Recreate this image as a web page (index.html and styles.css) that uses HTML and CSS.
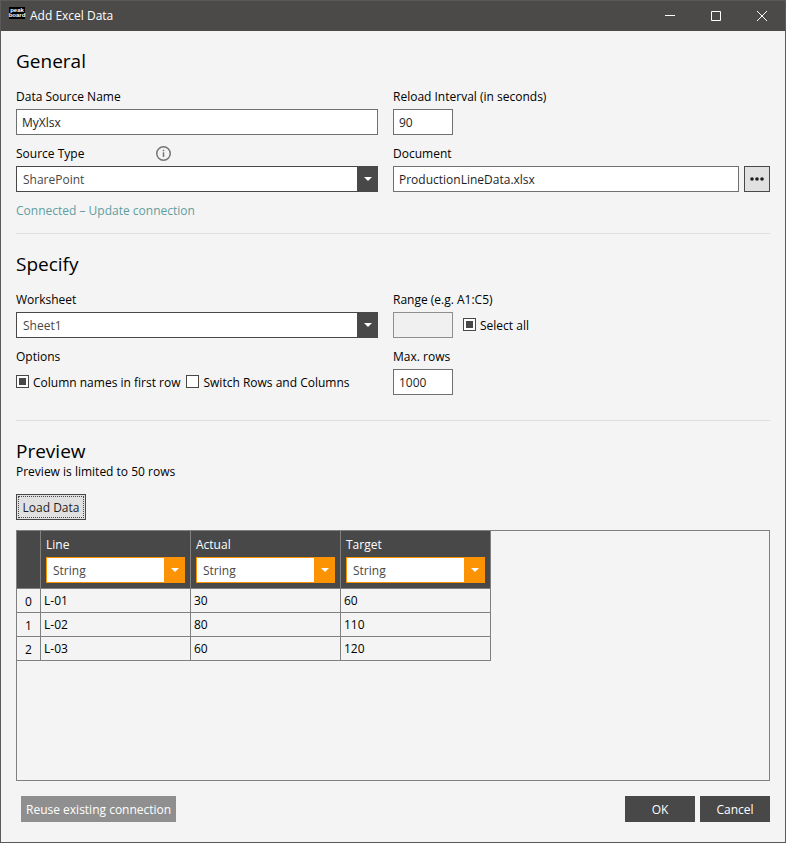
FILE: index.html
```html
<!DOCTYPE html>
<html lang="en">
<head>
<meta charset="utf-8">
<title>Add Excel Data</title>
<link rel="stylesheet" href="styles.css">
</head>
<body>
<div class="window">
  <header class="titlebar">
    <div class="logo"><span>peak</span><span>board</span></div>
    <span class="title">Add Excel Data</span>
    <div class="window-buttons">
      <button class="window-button" type="button" aria-label="Minimize">
        <svg viewBox="0 0 10 10"><path d="M0 4.500H10"/></svg>
      </button>
      <button class="window-button" type="button" aria-label="Maximize">
        <svg viewBox="0 0 10 10"><path d="M.5 .5H9.500V9.500H.5Z"/></svg>
      </button>
      <button class="window-button" type="button" aria-label="Close">
        <svg viewBox="0 0 10 10"><path d="M0 0L10 10M10 0L0 10"/></svg>
      </button>
    </div>
  </header>

  <main class="content">
    <section class="section">
      <h1 class="heading">General</h1>
      <div class="columns">
        <div class="field">
          <label class="label" for="name">Data Source Name</label>
          <input class="input" id="name" type="text" value="MyXlsx">
        </div>
        <div class="field">
          <label class="label" for="interval">Reload Interval (in seconds)</label>
          <input class="input short" id="interval" type="text" value="90">
        </div>
        <div class="field">
          <div class="label-row">
            <label class="label" for="type">Source Type</label>
            <svg class="info" viewBox="0 0 15 15" aria-hidden="true">
              <circle cx="7.500" cy="7.500" r="6.750"/>
              <path d="M7.500 6.200V11M7.500 3.800V5.200"/>
            </svg>
          </div>
          <div class="select-box">
            <select class="select" id="type"><option>SharePoint</option></select>
          </div>
        </div>
        <div class="field">
          <label class="label" for="document">Document</label>
          <div class="input-row">
            <input class="input" id="document" type="text" value="ProductionLineData.xlsx">
            <button class="browse" type="button" aria-label="Browse">
              <svg viewBox="0 0 16 4"><circle cx="3" cy="2" r="1.800"/><circle cx="8" cy="2" r="1.800"/><circle cx="13" cy="2" r="1.800"/></svg>
            </button>
          </div>
        </div>
      </div>
      <a class="link" href="#">Connected – Update connection</a>
    </section>

    <section class="section specify">
      <h1 class="heading">Specify</h1>
      <div class="columns">
        <div class="field">
          <label class="label" for="sheet">Worksheet</label>
          <div class="select-box">
            <select class="select" id="sheet"><option>Sheet1</option></select>
          </div>
        </div>
        <div class="field">
          <label class="label" for="range">Range (e.g. A1:C5)</label>
          <div class="range-row">
            <input class="input short" id="range" type="text" disabled>
            <label class="check"><input type="checkbox" checked>Select all</label>
          </div>
        </div>
        <div class="field">
          <span class="label">Options</span>
          <div class="options">
            <label class="check"><input type="checkbox" checked>Column names in first row</label>
            <label class="check"><input type="checkbox">Switch Rows and Columns</label>
          </div>
        </div>
        <div class="field">
          <label class="label" for="max">Max. rows</label>
          <input class="input short" id="max" type="text" value="1000">
        </div>
      </div>
    </section>

    <section class="preview">
      <h1 class="heading">Preview</h1>
      <p class="note">Preview is limited to 50 rows</p>
      <button class="load" type="button">Load Data</button>
      <div class="panel">
        <table class="grid">
          <thead>
            <tr>
              <th class="index"></th>
              <th><label class="label" for="c1">Line</label><div class="select-box accent"><select class="select" id="c1"><option>String</option></select></div></th>
              <th><label class="label" for="c2">Actual</label><div class="select-box accent"><select class="select" id="c2"><option>String</option></select></div></th>
              <th><label class="label" for="c3">Target</label><div class="select-box accent"><select class="select" id="c3"><option>String</option></select></div></th>
            </tr>
          </thead>
          <tbody>
            <tr><td class="index">0</td><td>L-01</td><td>30</td><td>60</td></tr>
            <tr><td class="index">1</td><td>L-02</td><td>80</td><td>110</td></tr>
            <tr><td class="index">2</td><td>L-03</td><td>60</td><td>120</td></tr>
          </tbody>
        </table>
      </div>
    </section>

    <footer class="footer">
      <button class="button reuse" type="button">Reuse existing connection</button>
      <button class="button" type="button">OK</button>
      <button class="button" type="button">Cancel</button>
    </footer>
  </main>
</div>
</body>
</html>
```
FILE: styles.css
```css
* {
  box-sizing: border-box;
}

body {
  margin: 0;
  background: #f4f4f4;
  color: #000;
  font: 12px/16px "Open Sans", "Segoe UI", sans-serif;
}

button,
input,
select {
  margin: 0;
  font: inherit;
}

.window {
  display: flex;
  flex-direction: column;
  min-height: 100vh;
  border: 1px solid #5a5a5a;
}

/* Title bar */
.titlebar {
  display: flex;
  align-items: center;
  height: 30px;
  padding-left: 8px;
  background: #4b4a48;
  color: #fff;
}

.logo {
  display: flex;
  flex-direction: column;
  align-items: center;
  justify-content: center;
  width: 16px;
  height: 12px;
  margin: 0 5px 6px 0;
  background: #000;
  color: #fff;
  font: bold 6px/5px "Liberation Sans", sans-serif;
}

.window-buttons {
  display: flex;
  margin-left: auto;
}

.window-button {
  display: flex;
  align-items: center;
  justify-content: center;
  width: 46px;
  height: 30px;
  padding: 0;
  border: 0;
  background: none;
}

.window-button svg {
  width: 10px;
  height: 10px;
  fill: none;
  stroke: #fff;
}

/* Sections */
.content {
  display: flex;
  flex: 1;
  flex-direction: column;
  padding: 16px 15px 20px;
}

.section {
  margin-bottom: 16px;
  padding-bottom: 14px;
  border-bottom: 1px solid #dfdfdf;
}

.specify {
  padding-bottom: 25px;
}

.heading {
  margin: 0 0 14px;
  font-size: 19px;
  font-weight: 400;
  line-height: 28px;
}

.columns {
  display: grid;
  grid-template-columns: 1fr 1fr;
  row-gap: 11px;
}

.field:nth-child(odd) {
  padding-right: 15px;
}

.label {
  display: block;
  margin-bottom: 4px;
}

.label-row {
  display: flex;
}

.label-row .label {
  width: 140px;
}

.info {
  width: 15px;
  height: 15px;
  fill: none;
  stroke: #757575;
  stroke-width: 1.5;
}

/* Controls */
.input {
  display: block;
  width: 100%;
  height: 26px;
  padding: 0 5px;
  border: 1px solid #707070;
  border-radius: 0;
  background: #fff;
  color: #1e1e1e;
}

.input:disabled {
  border-color: #8e8e8e;
  background: #f0f0f0;
}

.short {
  width: 60px;
}

.input-row {
  display: flex;
  gap: 5px;
}

.browse {
  display: flex;
  flex: none;
  align-items: center;
  justify-content: center;
  width: 26px;
  height: 26px;
  padding: 0;
  border: 1px solid #484848;
  background: #e1e1e1;
}

.browse svg {
  width: 16px;
  height: 4px;
  fill: #1e1e1e;
}

.select-box {
  --edge: #484848;
  position: relative;
}

.accent {
  --edge: #fb9304;
}

.select-box::after {
  position: absolute;
  top: 11px;
  right: 6px;
  border: 4px solid transparent;
  border-top-color: #fff;
  border-bottom: 0;
  content: "";
  pointer-events: none;
}

.select {
  display: block;
  width: 100%;
  height: 26px;
  padding: 2px 24px 0 6px;
  border: 1px solid var(--edge);
  border-radius: 0;
  appearance: none;
  background: linear-gradient(var(--edge), var(--edge)) right / 20px 100% no-repeat #fff;
  color: #484848;
}

.range-row {
  display: flex;
  align-items: center;
  gap: 10px;
}

.options {
  display: flex;
  align-items: center;
  gap: 6px;
  height: 26px;
}

.check {
  display: flex;
  align-items: center;
  gap: 4px;
  padding-top: 1px;
  white-space: nowrap;
}

.check input {
  width: 13px;
  height: 13px;
  margin-bottom: 2px;
  border: 1px solid #484848;
  appearance: none;
  background: #fff;
}

.check input:checked {
  background: #484848;
  box-shadow: inset 0 0 0 2px #fff;
}

.link {
  display: table;
  margin-top: 11px;
  color: #5f9ea0;
  text-decoration: none;
}

/* Preview */
.preview {
  display: flex;
  flex: 1;
  flex-direction: column;
  align-items: flex-start;
}

.preview .heading {
  margin: 0;
}

.note {
  margin: 0 0 15px;
  line-height: 14px;
}

.load {
  height: 26px;
  min-width: 70px;
  padding: 2px 4px 0;
  border: 1px solid #484848;
  outline: 1px dotted #484848;
  outline-offset: -3px;
  background: #e1e1e1;
  color: #1e1e1e;
}

.panel {
  flex: 1;
  align-self: stretch;
  margin-top: 10px;
  border: 1px solid #808080;
}

.grid {
  border-collapse: separate;
  border-spacing: 0;
  table-layout: fixed;
  width: 474px;
}

.grid th,
.grid td {
  border: solid #808080;
  border-width: 0 1px 1px 0;
  font-weight: 400;
  text-align: left;
}

.grid th {
  padding: 6px 5px 5px;
  background: #484848;
  color: #fff;
}

.grid td {
  height: 24px;
  padding: 0 3px;
}

.grid .index {
  width: 24px;
  text-align: center;
}

.grid td.index {
  padding-top: 2px;
}

/* Footer */
.footer {
  display: flex;
  gap: 5px;
  margin-top: 15px;
}

.button {
  min-width: 70px;
  height: 26px;
  padding: 2px 5px 0;
  border: 0;
  background: #484848;
  color: #fff;
}

.reuse {
  margin: 0 auto 0 5px;
  background: #8f8f8f;
}
```
